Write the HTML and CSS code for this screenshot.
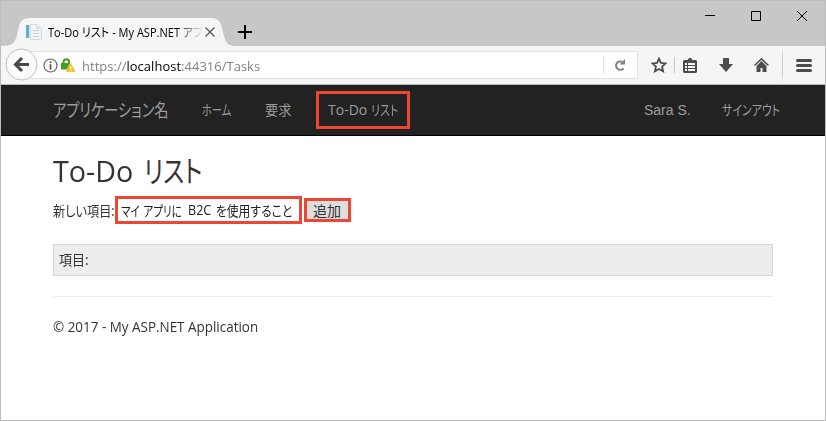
FILE: index.html
```html
<!DOCTYPE html>
<html lang="ja">
<head>
<meta charset="utf-8">
<title>To-Do リスト - My ASP.NET アプリケーション</title>
<link rel="stylesheet" href="styles.css">
</head>
<body>
<div class="window">
  <header class="titlebar">
    <div class="tab">
      <svg class="tab-shape" width="222" height="28" viewBox="0 0 222 28"><path fill="#f5f5f5" d="M-4 28C7 28 10 25 12 17C15 5 15 0 25 0H206C215 0 216 6 218 14C220 23 222 28 230 28Z"/></svg>
      <svg class="favicon" width="16" height="16" viewBox="0 0 16 16"><path fill="#f3f5f7" stroke="#d3d9dd" d="M4.500.5H10l5.500 4V15.500h-11z"/><path fill="#65acd9" d="M0 1h3v13H0z"/><path fill="#d5e0e8" d="M3 1h2v13H3zM10 1v4h5z"/><path stroke="#c5ced4" d="M7 6.500h6M7 9.500h6M7 12.500h6"/></svg>
      <div class="tab-title"><span class="fit">To-Do <span class="kana">リスト</span> - My ASP.NET <span class="kana">アプ</span></span></div>
      <svg class="tab-close" width="10" height="10" viewBox="0 0 10 10"><path stroke="#555" stroke-width="1.200" d="M.5.5l9 9M9.500.5l-9 9"/></svg>
    </div>
    <svg class="new-tab" width="14" height="14" viewBox="0 0 14 14"><path stroke="#000" stroke-width="2" d="M7 0v14M0 7h14"/></svg>
    <div class="window-controls">
      <svg width="10" height="10" viewBox="0 0 10 10"><path stroke="#000" d="M0 4.500h10"/></svg>
      <svg width="10" height="10" viewBox="0 0 10 10"><path fill="none" stroke="#000" d="M.5.5h9v9h-9z"/></svg>
      <svg width="10" height="10" viewBox="0 0 10 10"><path stroke="#000" d="M0 0l10 10M10 0L0 10"/></svg>
    </div>
  </header>
  <div class="toolbar">
    <div class="address">
      <svg class="info" width="15" height="15" viewBox="0 0 15 15"><circle cx="7.500" cy="7.500" r="6.500" fill="none" stroke="#666" stroke-width="1.200"/><path fill="#555" d="M6.700 3.200h1.700v1.700H6.700zM6.700 6.200h1.700v5.300H6.700z"/></svg>
      <svg class="lock" width="15" height="14" viewBox="0 0 15 14"><path fill="none" stroke="#489c24" stroke-width="2" d="M2.500 7V4a2.800 2.800 0 0 1 5.600 0V7"/><path fill="#489c24" d="M0 5h9v6.500H0z"/><path fill="#fbb910" stroke="#fff" stroke-width=".4" d="M9.500 4.500L14.800 14H4.500z"/><path fill="#fff" d="M9 8h1.300v3H9zM9 11.700h1.300v1.200H9z"/></svg>
      <div class="url"><span class="fit">https://<b>localhost</b>:44316/Tasks</span></div>
      <svg class="reload" width="12" height="12" viewBox="0 0 12 12"><path fill="none" stroke="#808080" stroke-width="2" d="M8.300 2.900A4.200 4.200 0 1 0 9.500 9.300"/><path fill="#808080" d="M11 0v5.500H5.500z"/></svg>
    </div>
    <svg class="back" width="33" height="33" viewBox="0 0 33 33"><circle cx="16.500" cy="16.500" r="15.500" fill="#fbfbfb" stroke="#bebebe"/><path fill="none" stroke="#484848" stroke-width="3" d="M24 16.500H11M17 10l-6.500 6.500L17 23"/></svg>
    <div class="tools">
      <svg class="star" width="16" height="16" viewBox="0 0 16 16"><path fill="none" stroke="#4c4c4c" stroke-width="1.800" d="M8 1.600l1.900 4.300 4.700.5-3.500 3.200 1 4.700L8 12l-4.100 2.300 1-4.700L1.400 6.400l4.700-.5z"/></svg>
      <i class="short-rule"></i>
      <svg class="clipboard" width="14" height="15" viewBox="0 0 14 15"><path fill="#4c4c4c" d="M1 2h3.500L6 0h2l1.500 2H13l1 1v11l-1 1H1l-1-1V3z"/><path fill="#f5f5f5" d="M2 5h2v2H2zm3 0h7v2H5zM2 8h2v2H2zm3 0h7v2H5zM2 11h2v2H2zm3 0h7v2H5z"/></svg>
      <svg class="download" width="14" height="14" viewBox="0 0 14 14"><path fill="#4c4c4c" d="M4 0h6v6h4L7 14 0 6h4z"/></svg>
      <svg class="home" width="15" height="14" viewBox="0 0 15 14"><path fill="none" stroke="#4c4c4c" stroke-width="1.500" d="M.5 7.500l7-6.600 7 6.600"/><path fill="#4c4c4c" d="M7.500 3l5 5v6h-4v-4h-2v4h-4V8z"/></svg>
      <i class="tall-rule"></i>
      <svg class="menu" width="16" height="13" viewBox="0 0 16 13"><path stroke="#4c4c4c" stroke-width="3" stroke-linecap="round" d="M1.500 1.500h13M1.500 6.500h13M1.500 11.500h13"/></svg>
    </div>
  </div>
  <nav class="navbar">
    <a class="brand"><span class="fit kana">アプリケーション名</span></a>
    <a class="nav-home"><span class="fit kana">ホーム</span></a>
    <a class="nav-claims"><span class="fit kana">要求</span></a>
    <a class="nav-todo"><span class="latin">To-Do</span><span class="fit kana">リスト</span></a>
    <a class="user">Sara S.</a>
    <a class="signout"><span class="fit kana">サインアウト</span></a>
  </nav>
  <main>
    <h1><span class="fit latin">To-Do</span><span class="fit kana">リスト</span></h1>
    <div class="new-item">
      <label><span class="fit kana">新しい項目:</span></label>
      <div class="field"><span class="fit kana lead">マイ アプリに</span><span class="fit mid">B2C</span><span class="fit kana tail">を使用すること</span></div>
      <div class="add"><span class="kana">追加</span></div>
    </div>
    <div class="items"><span class="fit kana">項目:</span></div>
    <footer><span class="fit">© 2017 - My ASP.NET Application</span></footer>
  </main>
</div>
</body>
</html>
```
FILE: styles.css
```css
* { box-sizing: border-box; }
body { margin: 0; font: 14px/20px "Open Sans", "Noto Sans CJK JP", sans-serif; color: #333; }
svg { display: block; flex: none; }
.window { width: 826px; height: 421px; border: 1px solid #bcbcbc; background: #fff; overflow: hidden; }
.fit { display: inline-block; white-space: nowrap; transform-origin: left center; }
.kana { font-family: "Noto Sans CJK JP", sans-serif; font-feature-settings: "palt"; }
.titlebar { height: 45px; background: #c7c7c7; display: flex; }
.tab { position: relative; width: 222px; height: 28px; margin: 17px 0 0 4px; padding-left: 22px; display: flex; align-items: center; }
.tab-shape { position: absolute; left: 0; top: 0; overflow: visible; }
.favicon, .tab-title, .tab-close { position: relative; }
.favicon { margin-left: -1px; }
.tab-title { width: 155px; margin-left: 6px; height: 20px; font-size: 12px; line-height: 20px; color: #000; overflow: hidden; -webkit-mask-image: linear-gradient(90deg, #000 128px, transparent 155px); mask-image: linear-gradient(90deg, #000 128px, transparent 155px); }
.tab-title .fit { transform: scaleX(.92); }
.tab-close { margin-left: 2px; }
.new-tab { margin: 24px 0 0 11px; }
.window-controls { display: flex; gap: 36px; margin: 10px 18px 0 auto; }
.toolbar { position: relative; height: 39px; background: #f5f5f5; border-bottom: 1px solid #b9bcbc; display: flex; align-items: center; }
.address { width: 620px; height: 28px; margin-left: 17px; border: 1px solid #e2e2e2; background: #fff; display: flex; align-items: center; }
.info { margin-left: 24px; }
.lock { margin-left: 3px; }
.url { width: 522px; height: 18px; margin-left: 6px; padding-top: 1px; line-height: 18px; border-right: 1px solid #e2e2e2; color: #808080; }
.url b { font-weight: 400; color: #000; }
.url .fit { transform: scaleX(.972); font-size: 13.3px; letter-spacing: .05px; }
.reload { margin-left: 10px; }
.back { position: absolute; left: 4px; top: 2px; }
.tools { flex: 1; height: 38px; display: flex; align-items: center; padding-left: 13px; }
.short-rule { width: 1px; height: 16px; margin-left: 7px; background: #c8c8c8; }
.clipboard { margin-left: 8px; }
.download { margin-left: 22px; }
.home { margin-left: 21px; }
.tall-rule { width: 1px; height: 38px; margin-left: 13px; background: linear-gradient(#f5f5f5, #ccc 30%, #ccc 70%, #f5f5f5); }
.menu { margin-left: 13px; }
.navbar { height: 51px; background: #222; border-bottom: 1px solid #000; color: #9d9d9d; display: flex; align-items: center; padding-left: 52px; }
.brand { width: 149px; font-size: 18px; }
.brand .fit { transform: translateY(-1px) scaleX(.79); }
.nav-home { width: 63px; }
.nav-home .fit { transform: translateY(-1px) scaleX(.73); }
.nav-claims { width: 51px; }
.nav-claims .fit { transform: translateY(-1px) scaleX(.94); }
.nav-todo { width: 94px; height: 38px; border: 3px solid #ee4632; padding: 5px 0 0 9px; white-space: nowrap; }
.nav-todo .latin { display: inline-block; width: 43px; }
.nav-todo .kana { transform: scaleX(.78); }
.user { width: 78px; margin-left: 234px; font-family: "Liberation Sans", sans-serif; letter-spacing: 0; }
.signout .fit { transform: translateY(-1px) scaleX(.78); }
main { padding: 18px 52px 0; }
h1 { margin: 0; height: 33px; font-size: 30px; line-height: 33px; font-weight: 400; display: flex; }
h1 .latin { width: 91px; transform: scaleX(.955); }
h1 .kana { transform: translateY(-1px) scaleX(.78); }
.new-item { margin-top: 9px; display: flex; align-items: center; }
label { width: 62px; }
label .fit { transform: scaleX(.87); }
.field { display: flex; width: 187px; height: 28px; border: 3px solid #ee4632; padding: 1px 0 0 3px; color: #222; }
.lead { width: 67px; word-spacing: 2px; transform: scaleX(.75); }
.mid { width: 28px; transform: scaleX(.9); }
.tail { width: 76px; transform: scaleX(.84); }
.add { width: 47px; height: 24px; margin-left: 2px; border: 3px solid #ee4632; background: #ddd; line-height: 18px; padding-left: 6px; }
.items { width: 720px; height: 32px; margin-top: 20px; border: 1px solid #d9d9d9; background: #ededed; padding: 4px 5px; }
.items .fit { transform: scaleX(.93); }
footer { width: 720px; margin-top: 20px; padding-top: 20px; border-top: 1px solid #eee; }
footer .fit { transform: scaleX(.96); }
```
